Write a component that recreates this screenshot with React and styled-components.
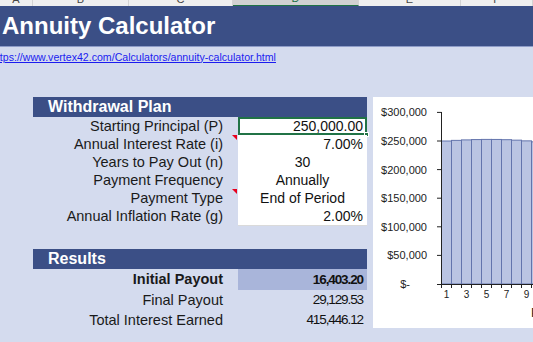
import React from "react";
import styled, { createGlobalStyle } from "styled-components";

const GlobalStyle = createGlobalStyle`
  html, body {
    margin: 0;
    padding: 0;
    background: #d4dbee;
  }
`;

const columns = [
  { letter: "A", width: 33 },
  { letter: "B", width: 96 },
  { letter: "C", width: 104 },
  { letter: "D", width: 126, active: true },
  { letter: "E", width: 102 },
  { letter: "F", width: 72 },
];

const plan = [
  { label: "Starting Principal (P)", value: "250,000.00", align: "right", selected: true },
  { label: "Annual Interest Rate (i)", value: "7.00%", align: "right", note: true },
  { label: "Years to Pay Out (n)", value: "30", align: "center" },
  { label: "Payment Frequency", value: "Annually", align: "center" },
  { label: "Payment Type", value: "End of Period", align: "center", note: true },
  { label: "Annual Inflation Rate (g)", value: "2.00%", align: "right" },
];

const results = [
  { label: "Initial Payout", value: "16,403.20", strong: true, height: 21 },
  { label: "Final Payout", value: "29,129.53", height: 20 },
  { label: "Total Interest Earned", value: "415,446.12", height: 20 },
];

// balance at the start of each year
function balances() {
  const out = [];
  let b = 250000;
  let pay = 16403.2;
  for (let i = 0; i < 10; i++) {
    out.push(b);
    b = b * 1.07 - pay;
    pay = pay * 1.02;
  }
  return out;
}

function App() {
  return (
    <>
      <GlobalStyle />
      <Page>
        <ColumnHeaders>
          {columns.map((c) => (
            <ColumnHead key={c.letter} $width={c.width} $active={c.active}>
              <span>{c.letter}</span>
            </ColumnHead>
          ))}
        </ColumnHeaders>

        <TitleBar>Annuity Calculator</TitleBar>

        <LinkRow>
          <a href="#">https://www.vertex42.com/Calculators/annuity-calculator.html</a>
        </LinkRow>

        <Body>
          <LeftColumn>
            <SectionHeader>Withdrawal Plan</SectionHeader>
            {plan.map((row) => (
              <FormRow key={row.label}>
                <Label>{row.label}</Label>
                <NoteCell>{row.note && <NoteMark />}</NoteCell>
                <InputCell $align={row.align} $selected={row.selected}>
                  {row.value}
                </InputCell>
              </FormRow>
            ))}

            <SectionHeader $spaced>Results</SectionHeader>
            {results.map((row) => (
              <ResultRow key={row.label} $height={row.height}>
                <Label $strong={row.strong}>{row.label}</Label>
                <span />
                <ResultValue $strong={row.strong}>{row.value}</ResultValue>
              </ResultRow>
            ))}
          </LeftColumn>

          <ChartPanel>
            <BalanceChart />
          </ChartPanel>
        </Body>
      </Page>
    </>
  );
}

function BalanceChart() {
  const base = 187;
  const scale = 28.6 / 50000;
  const ticks = [
    { v: 300000, t: "$300,000" },
    { v: 250000, t: "$250,000" },
    { v: 200000, t: "$200,000" },
    { v: 150000, t: "$150,000" },
    { v: 100000, t: "$100,000" },
    { v: 50000, t: "$50,000" },
  ];
  const data = balances();

  return (
    <svg width="160" height="231" viewBox="0 0 160 231">
      {data.map((v, i) => {
        const h = v * scale;
        return (
          <rect
            key={i}
            x={68.5 + i * 10}
            y={base - h}
            width="10"
            height={h}
            fill="#bac4e2"
            stroke="#6374ac"
            strokeWidth="1"
          />
        );
      })}

      <line x1="68.5" y1="15" x2="68.5" y2={base} stroke="#222" strokeWidth="1" />
      <line x1="64" y1={base + 0.5} x2="160" y2={base + 0.5} stroke="#222" strokeWidth="1" />

      {ticks.map((tk) => {
        const y = base - tk.v * scale;
        return (
          <g key={tk.t}>
            <line x1="64" y1={y} x2="68.5" y2={y} stroke="#222" strokeWidth="1" />
            <text x="54" y={y + 4} textAnchor="end" fontSize="11" fill="#222" fontFamily="Liberation Sans, Arial, sans-serif">
              {tk.t}
            </text>
          </g>
        );
      })}
      <line x1="64" y1={base + 0.5} x2="68.5" y2={base + 0.5} stroke="#222" strokeWidth="1" />
      <text x="37" y={base + 4} textAnchor="end" fontSize="11" fill="#222" fontFamily="Liberation Sans, Arial, sans-serif">
        $-
      </text>

      {data.map((_, i) => (
        <line key={i} x1={68.5 + i * 10} y1={base} x2={68.5 + i * 10} y2={base + 4} stroke="#222" strokeWidth="1" />
      ))}

      {[1, 3, 5, 7, 9].map((n) => (
        <text key={n} x={63.5 + n * 10} y="201" textAnchor="middle" fontSize="10" fill="#222" fontFamily="Liberation Sans, Arial, sans-serif">
          {n}
        </text>
      ))}

      <text x="158" y="220" fontSize="13" fill="#222" fontFamily="Liberation Sans, Arial, sans-serif">
        Period
      </text>
    </svg>
  );
}

export default App;

const Page = styled.div`
  width: 533px;
  height: 342px;
  overflow: hidden;
  background: #d4dbee;
  font-family: "Liberation Sans", Arial, sans-serif;
  color: #1a1a1a;
`;

const ColumnHeaders = styled.div`
  display: flex;
  height: 6px;
  overflow: hidden;
  background: #efefef;
`;

const ColumnHead = styled.div`
  flex: 0 0 ${(p) => p.$width}px;
  box-sizing: border-box;
  display: flex;
  align-items: flex-end;
  justify-content: center;
  padding-bottom: 1px;
  border-right: 1px solid #d4d4d4;
  background: ${(p) => (p.$active ? "#d2d2d2" : "#efefef")};
  border-bottom: ${(p) => (p.$active ? "1px solid #217346" : "none")};
  color: ${(p) => (p.$active ? "#217346" : "#444")};
  font-size: 11px;
  line-height: 11px;

  span {
    display: block;
  }
`;

const TitleBar = styled.div`
  height: 40px;
  display: flex;
  align-items: center;
  padding-left: 2px;
  background: #3b4f86;
  border-bottom: 1px solid #8e9cc8;
  color: #fff;
  font-size: 24px;
  font-weight: 700;
`;

const LinkRow = styled.div`
  height: 19px;
  display: flex;
  align-items: center;
  white-space: nowrap;

  a {
    margin-left: -9px;
    font-size: 10.6px;
    color: #1b1bf0;
    text-decoration: underline;
  }
`;

const Body = styled.div`
  display: flex;
  align-items: flex-start;
  margin-top: 31px;
  padding-left: 33px;
`;

const LeftColumn = styled.div`
  width: 334px;
  flex: 0 0 334px;
`;

const SectionHeader = styled.div`
  height: 20px;
  line-height: 20px;
  margin-top: ${(p) => (p.$spaced ? "24px" : "0")};
  padding-left: 15px;
  background: #3b4f86;
  color: #fff;
  font-size: 16px;
  font-weight: 700;
`;

const FormRow = styled.div`
  display: grid;
  grid-template-columns: 190px 15px 129px;
  height: 18px;
  font-size: 14.5px;
  line-height: 18px;
`;

const ResultRow = styled.div`
  display: grid;
  grid-template-columns: 190px 15px 129px;
  height: ${(p) => p.$height}px;
  line-height: ${(p) => p.$height}px;
  font-size: 14.5px;
`;

const Label = styled.div`
  text-align: right;
  white-space: nowrap;
  font-weight: ${(p) => (p.$strong ? 700 : 400)};
  color: #1a1a1a;
`;

const NoteCell = styled.div`
  position: relative;
`;

const NoteMark = styled.div`
  position: absolute;
  top: 0;
  right: 1px;
  width: 0;
  height: 0;
  border-top: 5px solid #e8001c;
  border-left: 5px solid transparent;
`;

const InputCell = styled.div`
  position: relative;
  box-sizing: border-box;
  padding: 0 4px;
  background: #fff;
  border-bottom: 1px solid #dadada;
  text-align: ${(p) => p.$align};
  font-size: 14px;
  color: #111;
  box-shadow: ${(p) => (p.$selected ? "inset 0 0 0 2px #217346" : "none")};

  &::after {
    content: "";
    display: ${(p) => (p.$selected ? "block" : "none")};
    position: absolute;
    right: -2px;
    bottom: -2px;
    width: 5px;
    height: 5px;
    background: #217346;
    border: 1px solid #fff;
    box-sizing: border-box;
  }
`;

const ResultValue = styled.div`
  padding-right: 4px;
  text-align: right;
  font-size: 13.5px;
  letter-spacing: -1.1px;
  font-weight: ${(p) => (p.$strong ? 700 : 400)};
  background: ${(p) => (p.$strong ? "#a9b5da" : "transparent")};
  color: #111;
`;

const ChartPanel = styled.div`
  flex: 1 0 160px;
  height: 231px;
  margin-left: 6px;
  background: #fff;
`;
